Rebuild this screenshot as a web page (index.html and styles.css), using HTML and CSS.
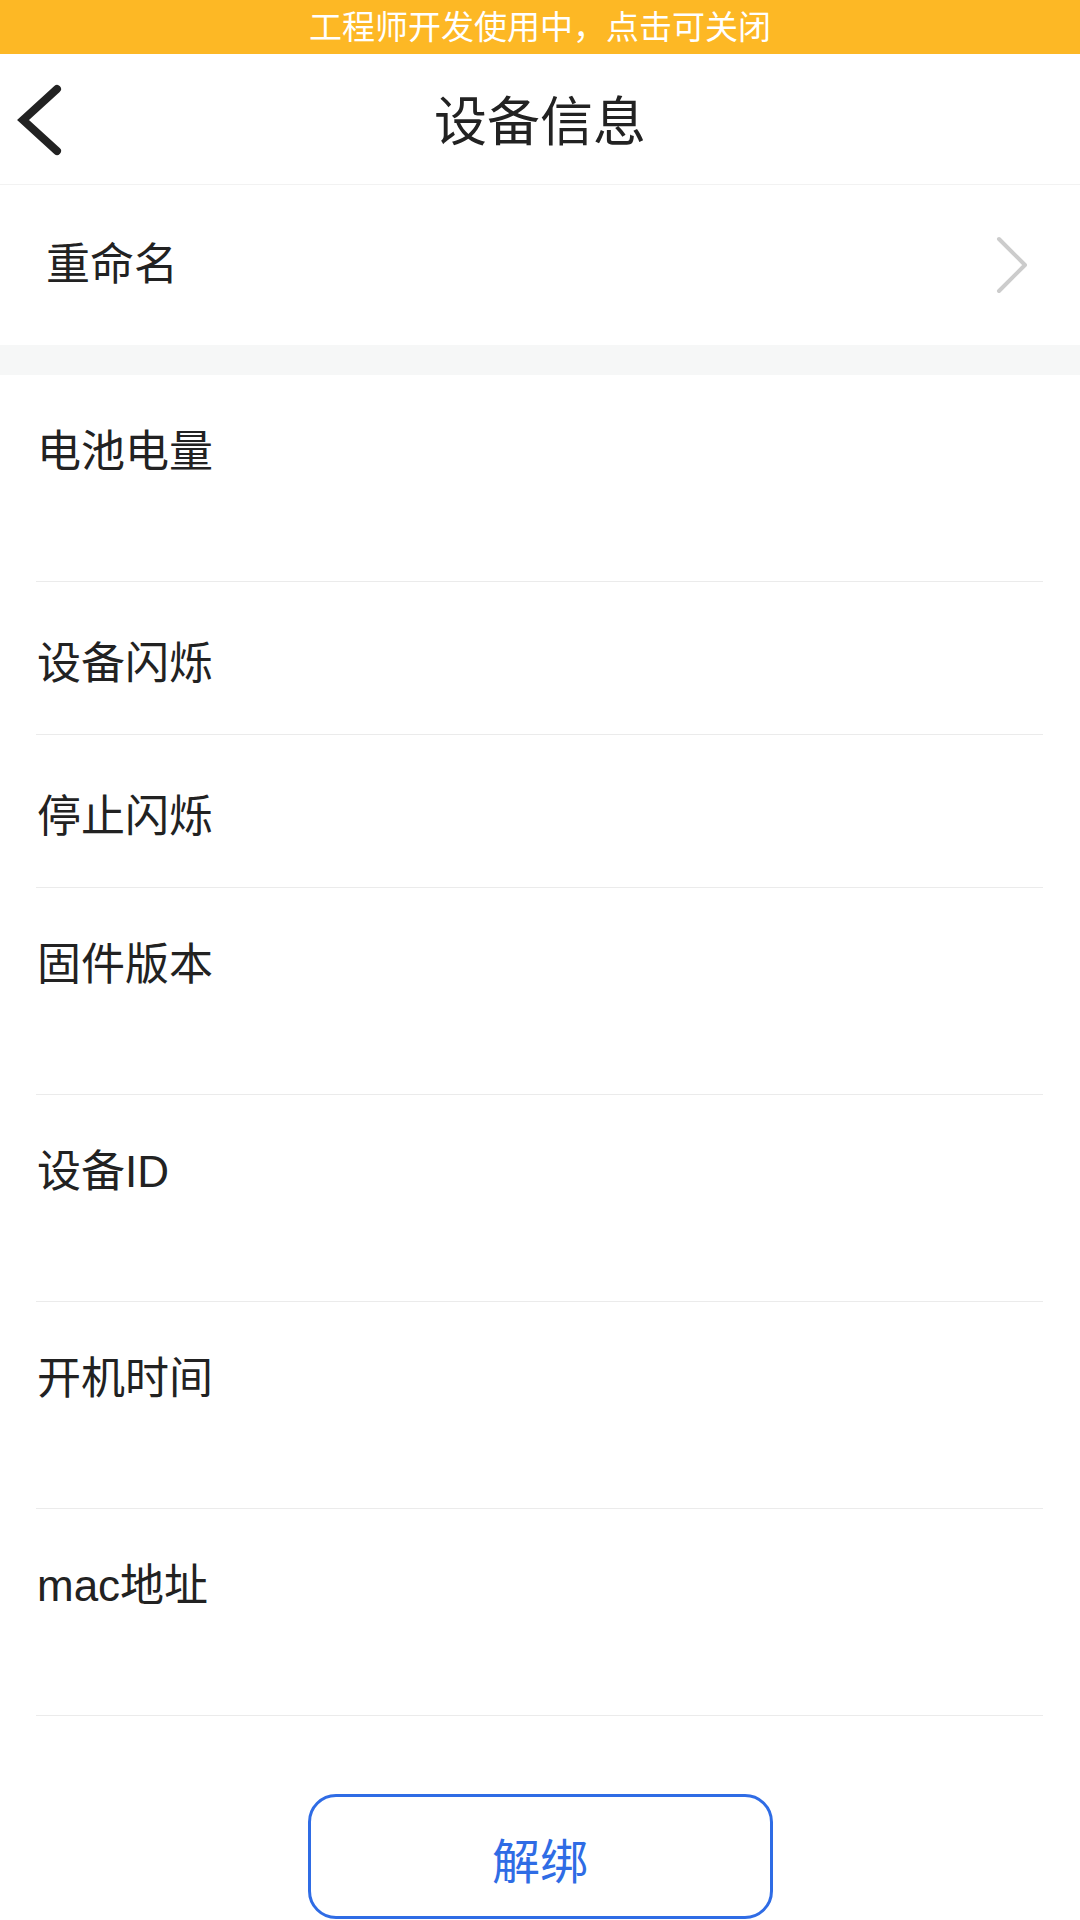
FILE: index.html
```html
<!DOCTYPE html>
<html lang="zh-CN">
<head>
    <meta charset="UTF-8">
    <meta name="viewport" content="width=device-width, initial-scale=1.0">
    <title>设备信息</title>
    <link rel="stylesheet" href="styles.css">
</head>
<body>
    <div class="dev-banner">工程师开发使用中，点击可关闭</div>

    <div class="header">
        <button class="back" aria-label="返回">
            <svg width="52" height="78" viewBox="0 0 52 78">
                <path d="M45 8 L11 39 L45 70" fill="none" stroke="#222" stroke-width="8" stroke-linecap="round" stroke-linejoin="miter"/>
            </svg>
        </button>
        <h1 class="title">设备信息</h1>
        <span></span>
    </div>

    <div class="rename">
        <span>重命名</span>
        <svg width="36" height="60" viewBox="0 0 36 60">
            <path d="M5 4 L31 30 L5 56" fill="none" stroke="#cccccc" stroke-width="4" stroke-linecap="round" stroke-linejoin="round"/>
        </svg>
    </div>

    <div class="gap"></div>

    <div class="list">
        <div class="row tall">
            <div class="label">电池电量</div>
            <div class="value" id="battery"></div>
        </div>
        <div class="row">
            <div class="label">设备闪烁</div>
        </div>
        <div class="row">
            <div class="label">停止闪烁</div>
        </div>
        <div class="row tall">
            <div class="label">固件版本</div>
            <div class="value" id="firmware"></div>
        </div>
        <div class="row tall">
            <div class="label">设备ID</div>
            <div class="value" id="deviceId"></div>
        </div>
        <div class="row tall">
            <div class="label">开机时间</div>
            <div class="value" id="bootTime"></div>
        </div>
        <div class="row tall">
            <div class="label">mac地址</div>
            <div class="value" id="mac"></div>
        </div>
    </div>

    <div class="actions">
        <button class="unbind">解绑</button>
    </div>
</body>
</html>
```

FILE: styles.css
```css
body {
    margin: 0;
    background: #ffffff;
    color: #222222;
    font-family: "Liberation Sans", "Noto Sans CJK SC", sans-serif;
}
.dev-banner {
    height: 52px;
    padding-top: 2px;
    background: #fdb825;
    color: #ffffff;
    font-size: 33px;
    line-height: 52px;
    text-align: center;
}
.header {
    display: grid;
    grid-template-columns: 1fr auto 1fr;
    align-items: center;
    height: 130px;
    border-bottom: 1px solid #f2f2f2;
}
.back {
    justify-self: start;
    display: flex;
    padding: 2px 0 0 12px;
    border: none;
    background: none;
}
.title {
    margin: 0;
    padding-top: 7px;
    font-size: 53px;
    font-weight: normal;
    line-height: 1.2;
}
.rename {
    display: flex;
    align-items: center;
    justify-content: space-between;
    height: 160px;
    padding: 0 50px 0 46px;
    font-size: 44px;
    line-height: 62px;
}
.rename svg {
    display: block;
}
.gap {
    height: 30px;
    background: #f6f7f7;
}
.list {
    margin: 0 37px 0 36px;
}
.row {
    padding: 51px 0 39px 1px;
    border-bottom: 1px solid #ebebeb;
}
.row.tall {
    padding: 46px 0 42px 1px;
}
.label {
    font-size: 44px;
    line-height: 62px;
}
.value {
    min-height: 56px;
    font-size: 36px;
    color: #888888;
}
.actions {
    display: flex;
    justify-content: center;
    padding-top: 78px;
}
.unbind {
    width: 465px;
    height: 125px;
    padding-top: 4px;
    border: 3px solid #2f6ce5;
    border-radius: 28px;
    background: #ffffff;
    color: #2f6ce5;
    font-family: inherit;
    font-size: 48px;
}
```
